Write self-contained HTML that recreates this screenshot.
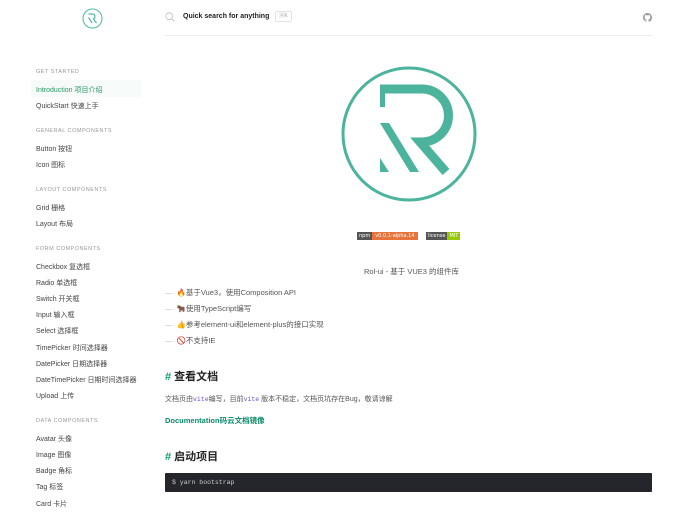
<!DOCTYPE html>
<html><head><meta charset="utf-8">
<style>
*{margin:0;padding:0;box-sizing:border-box}
body{width:688px;height:512px;overflow:hidden;background:#fff;font-family:"Liberation Sans","Noto Sans CJK SC",sans-serif;color:#2c3e50;position:relative}
.a{position:absolute;white-space:nowrap}
.sec{font-size:5.5px;letter-spacing:.5px;color:#999;left:36px}
.it{font-size:7px;color:#444;left:36px}
.li{font-size:7.5px;color:#555;left:165px}
.li span{color:#bbb;margin-right:4px}
h2{position:absolute;left:165px;font-size:11px;font-weight:bold;color:#222;font-family:"Liberation Sans","Noto Sans CJK SC",sans-serif}
h2 b{color:#0a9a6e}
code{font-family:"Liberation Mono",monospace;color:#6a4fd0;font-size:6.5px}
</style></head><body>
<svg class="a" style="left:82px;top:8px" width="21" height="21" viewBox="0 0 21 21"><circle cx="10.5" cy="10.5" r="9.5" fill="none" stroke="#4fb9a1" stroke-width="1"/><path d="M6.5 6H11.5A3 3 0 0 1 11.5 11L14.5 15M6.5 9.5L10 15" fill="none" stroke="#4fb9a1" stroke-width="1.2"/></svg>
<svg class="a" style="left:165px;top:12px" width="10" height="10" viewBox="0 0 10 10"><circle cx="4.2" cy="4.2" r="3.4" fill="none" stroke="#bbb" stroke-width=".8"/><path d="M6.7 6.7L9.3 9.3" stroke="#bbb" stroke-width=".8"/></svg>
<div class="a" style="left:183px;top:13px;font-size:7px;font-weight:bold;color:#222">Quick search for anything</div>
<div class="a" style="left:275px;top:11px;width:17px;height:11px;border:1px solid #e3e3e3;border-radius:2px;font-size:5px;color:#999;text-align:center;line-height:9px">⌘K</div>
<svg class="a" style="left:643px;top:13px" width="9" height="9" viewBox="0 0 16 16"><path fill="#999" d="M8 0C3.58 0 0 3.58 0 8c0 3.540 2.29 6.53 5.47 7.59.4.07.55-.17.55-.38v-1.33c-2.23.48-2.7-1.07-2.7-1.07-.36-.92-.89-1.170-.89-1.17-.73-.5.05-.49.05-.49.8.06 1.23.83 1.23.83.71 1.22 1.87.87 2.33.66.07-.52.28-.87.5-1.07-1.77-.2-3.64-.89-3.64-3.95 0-.87.31-1.59.82-2.15-.08-.2-.36-1.02.08-2.12 0 0 .67-.21 2.2.82.64-.18 1.32-.27 2-.27s1.36.09 2 .27c1.53-1.04 2.2-.82 2.2-.82.44 1.1.16 1.92.08 2.12.51.56.82 1.27.82 2.15 0 3.07-1.87 3.75-3.65 3.95.29.25.54.73.54 1.48v2.2c0 .21.15.46.55.38A8.01 8.01 0 0016 8c0-4.42-3.58-8-8-8z"/></svg>
<div class="a" style="left:165px;top:35px;width:488px;height:1px;background:#eee"></div>

<div class="a sec" style="top:69px">GET STARTED</div>
<div class="a" style="left:31px;top:80px;width:110px;height:17px;background:#f6faf8"></div>
<div class="a it" style="top:85px;color:#2a9a6a">Introduction 项目介绍</div>
<div class="a it" style="top:101px">QuickStart 快速上手</div>
<div class="a sec" style="top:128px">GENERAL COMPONENTS</div>
<div class="a it" style="top:144px">Button 按钮</div>
<div class="a it" style="top:160px">Icon 图标</div>
<div class="a sec" style="top:187px">LAYOUT COMPONENTS</div>
<div class="a it" style="top:203px">Grid 栅格</div>
<div class="a it" style="top:219px">Layout 布局</div>
<div class="a sec" style="top:246px">FORM COMPONENTS</div>
<div class="a it" style="top:262px">Checkbox 复选框</div>
<div class="a it" style="top:278px">Radio 单选框</div>
<div class="a it" style="top:294px">Switch 开关框</div>
<div class="a it" style="top:310px">Input 输入框</div>
<div class="a it" style="top:326px">Select 选择框</div>
<div class="a it" style="top:343px">TimePicker 时间选择器</div>
<div class="a it" style="top:359px">DatePicker 日期选择器</div>
<div class="a it" style="top:375px">DateTimePicker 日期时间选择器</div>
<div class="a it" style="top:391px">Upload 上传</div>
<div class="a sec" style="top:418px">DATA COMPONENTS</div>
<div class="a it" style="top:434px">Avatar 头像</div>
<div class="a it" style="top:450px">Image 图像</div>
<div class="a it" style="top:466px">Badge 角标</div>
<div class="a it" style="top:482px">Tag 标签</div>
<div class="a it" style="top:499px">Card 卡片</div>

<svg class="a" style="left:340px;top:66px" width="140" height="140" viewBox="340 66 140 140">
<circle cx="409" cy="134" r="66" fill="none" stroke="#4cb39c" stroke-width="3"/>
<path d="M380 89H422A26.5 26.5 0 0 1 422 142H420L446 172" fill="none" stroke="#4cb39c" stroke-width="9" stroke-linejoin="miter"/>
<path d="M380 89V107H385V89Z" fill="#4cb39c"/>
<path d="M380 123H389L419 172H410Z" fill="#4cb39c"/>
<path d="M380 158L389 172H380Z" fill="#4cb39c"/>
</svg>

<div class="a" style="left:357px;top:232px;height:8px;font-size:5px;line-height:8px;color:#fff;font-family:'DejaVu Sans',sans-serif"><span style="background:#555;padding:0 2px;display:inline-block">npm</span><span style="background:#e8743b;padding:0 3px;display:inline-block">v0.0.1-alpha.14</span></div>
<div class="a" style="left:426px;top:232px;height:8px;font-size:5px;line-height:8px;color:#fff;font-family:'DejaVu Sans',sans-serif"><span style="background:#555;padding:0 2px;display:inline-block">license</span><span style="background:#97ca00;padding:0 2px;display:inline-block">MIT</span></div>

<div class="a" style="left:364px;top:266px;font-size:7.5px;color:#555">Rol-ui - 基于 VUE3 的组件库</div>

<div class="a li" style="top:287px"><span>—</span>🔥基于Vue3，使用Composition API</div>
<div class="a li" style="top:303px"><span>—</span>🐂使用TypeScript编写</div>
<div class="a li" style="top:319px"><span>—</span>👍参考element-ui和element-plus的接口实现</div>
<div class="a li" style="top:335px"><span>—</span>🚫不支持IE</div>

<h2 style="top:368px"><b>#</b> 查看文档</h2>
<div class="a" style="left:165px;top:394px;font-size:7px;color:#555">文档页由<code>vite</code>编写，目前<code>vite</code> 版本不稳定，文档页坑存在Bug，敬请谅解</div>
<div class="a" style="left:165px;top:415px;font-size:7.5px;color:#0a8a6a;font-weight:bold">Documentation码云文档镜像</div>
<h2 style="top:448px"><b>#</b> 启动项目</h2>
<div class="a" style="left:165px;top:473px;width:487px;height:19px;background:#25262b;border-radius:1px"></div>
<div class="a" style="left:172px;top:479px;font-family:'Liberation Mono',monospace;font-size:6.5px;color:#ccc">$ yarn bootstrap</div>
</body></html>
